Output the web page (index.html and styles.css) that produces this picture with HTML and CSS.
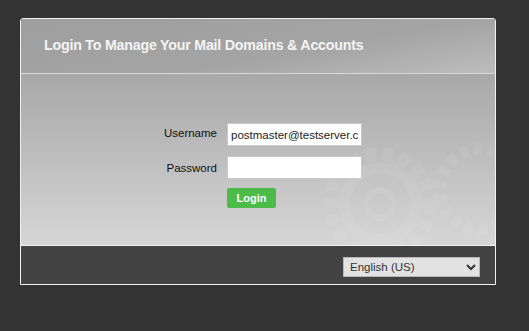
FILE: index.html
```html
<!DOCTYPE html>
<html lang="en">
<head>
  <meta charset="UTF-8" />
  <title>Mail Admin - Login</title>
  <link rel="stylesheet" href="styles.css">
</head>
<body>
  <div class="login-box">
    <div class="login-head">Login To Manage Your Mail Domains &amp; Accounts</div>
    <div class="login-body">
      <svg class="gears" width="200" height="170" viewBox="0 0 200 170">
        <g fill="none" stroke="#ffffff" stroke-opacity="0.07">
          <circle cx="85" cy="110" r="50" stroke-width="14" stroke-dasharray="10 7"/>
          <circle cx="85" cy="110" r="36" stroke-width="12"/>
          <circle cx="85" cy="110" r="14" stroke-width="6"/>
          <circle cx="185" cy="95" r="40" stroke-width="12" stroke-dasharray="8 6"/>
        </g>
      </svg>
      <form class="login-form" onsubmit="return false">
        <label for="user">Username</label>
        <input id="user" type="text" value="postmaster@testserver.com">
        <label for="pass">Password</label>
        <input id="pass" type="password">
        <span></span>
        <button type="submit" class="btn-login">Login</button>
      </form>
    </div>
    <div class="login-foot">
      <select class="lang">
        <option>English (US)</option>
      </select>
    </div>
  </div>
</body>
</html>
```

FILE: styles.css
```css
body { margin: 0; padding: 18px 20px; background: #333333; font-family: "Liberation Sans", Arial, sans-serif; }
.login-box { width: 474px; border: 1px solid #f2f2f2; border-radius: 3px 3px 0 0; overflow: hidden; }
.login-head { height: 55px; box-sizing: border-box; padding: 18px 0 0 23px; color: #f4f4f4; font-size: 14.2px; font-weight: bold; letter-spacing: -0.2px; background: linear-gradient(170deg, #9e9e9e 0%, #a4a4a4 60%, #bdbdbd 100%); border-bottom: 1px solid #d8d8d8; }
.login-body { position: relative; height: 172px; box-sizing: border-box; padding-top: 49px; background: linear-gradient(to bottom, #a8a8a8 0%, #bcbcbc 45%, #d6d6d6 100%); border-bottom: 1px solid #f2f2f2; overflow: hidden; }
.gears { position: absolute; right: 0; top: 20px; }
.login-form { position: relative; display: grid; grid-template-columns: 70px 135px; column-gap: 10px; row-gap: 10px; padding-left: 126px; align-items: center; }
.login-form label { text-align: right; font-size: 11.5px; color: #111; }
.login-form label[for="user"] { margin-top: -4px; }
.login-form input { width: 135px; height: 23px; box-sizing: border-box; border: 1px solid #c8c8c8; padding: 0 3px; font-family: inherit; font-size: 11.5px; color: #222; background: #fff; }
.btn-login { justify-self: start; width: 49px; height: 20px; margin-top: -1px; padding: 0; border: none; border-radius: 2px; background: #4cbb47; color: #fff; font-family: inherit; font-size: 11px; font-weight: bold; }
.login-foot { height: 38px; box-sizing: border-box; padding: 11px 15px 0 0; display: flex; justify-content: flex-end; align-items: flex-start; background: #434343; }
.lang { width: 137px; height: 20px; border: 1px solid #b8b8b8; border-radius: 0; background: #e2e2e2; color: #333; font-family: inherit; font-size: 11.5px; padding: 0 2px; }
```
